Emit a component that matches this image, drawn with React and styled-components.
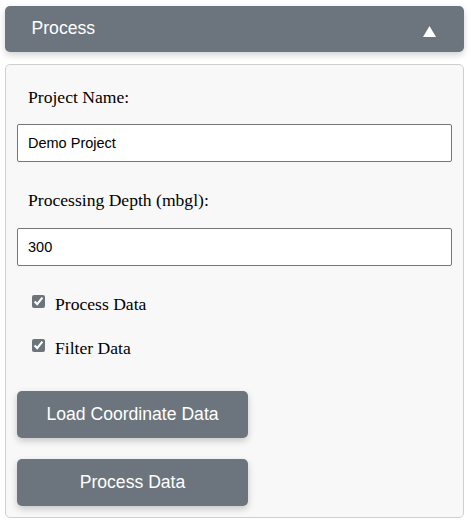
import React, { useState } from "react";
import styled, { createGlobalStyle } from "styled-components";

const Global = createGlobalStyle`
  html, body { margin: 0; padding: 0; background: #ffffff; }
  body { font-family: "Liberation Serif", "Times New Roman", serif; }
  * { box-sizing: border-box; }
`;

const Wrapper = styled.div`
  width: 459px;
  margin: 6px 0 0 5px;
  display: flex;
  flex-direction: column;
  gap: 12px;
`;

const Header = styled.div`
  height: 46px;
  background: #6c757d;
  border-radius: 5px;
  box-shadow: 0 3px 7px rgba(0, 0, 0, 0.18);
  display: flex;
  align-items: center;
  justify-content: space-between;
  padding: 0 28px 0 26px;
  color: #ffffff;
  font-family: "Liberation Sans", Arial, sans-serif;
  font-size: 17.6px;
`;

const Title = styled.span`
  padding-left: 0.5px;
  padding-bottom: 1px;
`;

const Arrow = styled.svg`
  display: block;
  margin-top: 4px;
`;

const Panel = styled.div`
  background: #f8f8f8;
  border: 1px solid #cfcfcf;
  border-radius: 5px;
  padding: 11px;
  display: flex;
  flex-direction: column;
`;

const Label = styled.label`
  display: block;
  font-size: 17.6px;
  line-height: 20px;
  color: #000;
  padding-left: 11px;
  margin-top: ${(p) => p.$top}px;
`;

const TextInput = styled.input`
  display: block;
  width: 100%;
  height: 38px;
  margin-top: 17.6px;
  border: 1px solid #767676;
  border-radius: 2px;
  background: #ffffff;
  padding: 0 10px;
  font-family: "Liberation Sans", Arial, sans-serif;
  font-size: 14.5px;
  color: #000;
  outline: none;
`;

const CheckRow = styled.label`
  display: flex;
  align-items: center;
  height: 20px;
  margin-top: ${(p) => p.$top}px;
  padding-left: 15px;
  font-size: 17.6px;
  line-height: 20px;
  color: #000;
  gap: 10px;
`;

const Check = styled.input`
  width: 13px;
  height: 13px;
  margin: 0 0 4px 0;
  accent-color: #6c757d;
`;

const Button = styled.button`
  width: 231px;
  height: 47px;
  margin-top: ${(p) => p.$top}px;
  border: none;
  border-radius: 5px;
  background: #6c757d;
  color: #ffffff;
  font-family: "Liberation Sans", Arial, sans-serif;
  font-size: 17.6px;
  box-shadow: 0 3px 7px rgba(0, 0, 0, 0.2);
  cursor: pointer;
`;

export default function App() {
  const [name, setName] = useState("Demo Project");
  const [depth, setDepth] = useState("300");
  const [proc, setProc] = useState(true);
  const [filt, setFilt] = useState(true);
  return (
    <>
      <Global />
      <Wrapper>
        <Header>
          <Title>Process</Title>
          <Arrow width="13" height="11" viewBox="0 0 13 11">
            <polygon points="6.5,0 13,11 0,11" fill="#ffffff" />
          </Arrow>
        </Header>
        <Panel>
          <Label $top={10.5}>Project Name:</Label>
          <TextInput value={name} onChange={(e) => setName(e.target.value)} />
          <Label $top={28}>Processing Depth (mbgl):</Label>
          <TextInput value={depth} onChange={(e) => setDepth(e.target.value)} />
          <CheckRow $top={28}>
            <Check type="checkbox" checked={proc} onChange={() => setProc(!proc)} />
            Process Data
          </CheckRow>
          <CheckRow $top={24}>
            <Check type="checkbox" checked={filt} onChange={() => setFilt(!filt)} />
            Filter Data
          </CheckRow>
          <Button $top={33}>Load Coordinate Data</Button>
          <Button $top={21.5}>Process Data</Button>
        </Panel>
      </Wrapper>
    </>
  );
}
